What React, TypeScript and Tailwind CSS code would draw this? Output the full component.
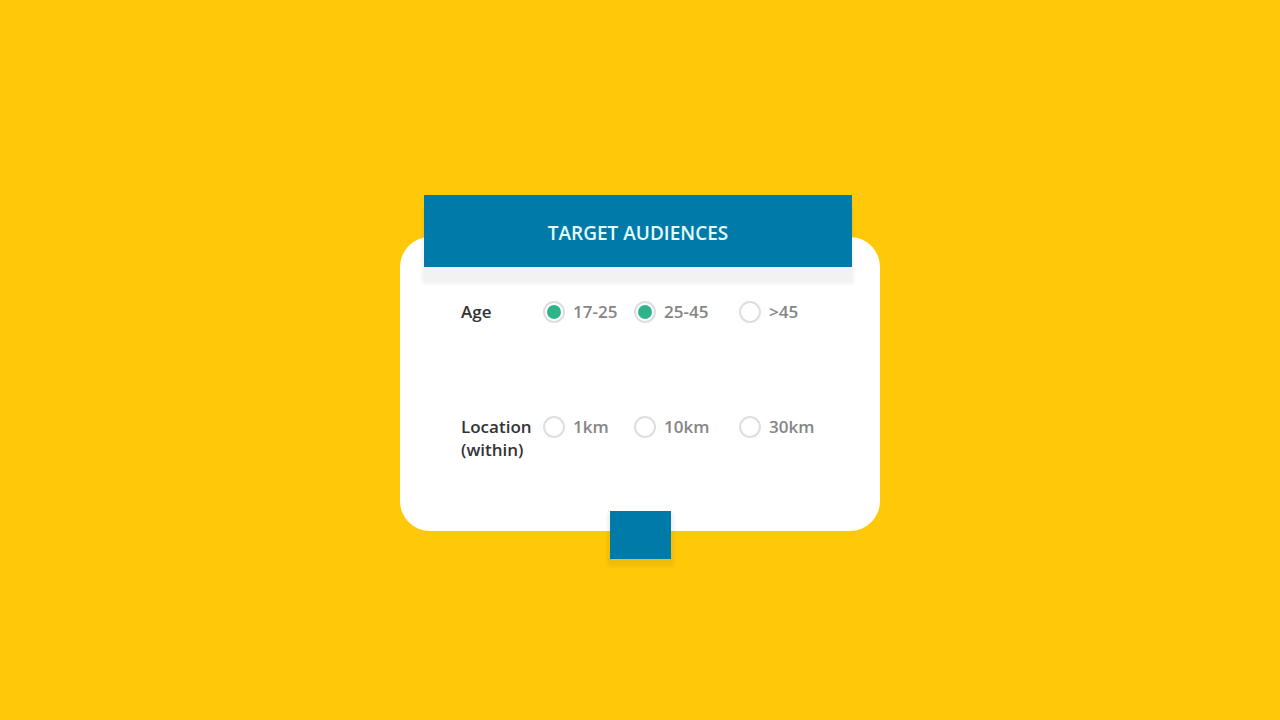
type Option = { id: string; label: string; checked?: boolean };

const ages: Option[] = [
  { id: 'age-17-25', label: '17-25', checked: true },
  { id: 'age-25-45', label: '25-45', checked: true },
  { id: 'age-over-45', label: '>45' },
];

const distances: Option[] = [
  { id: 'within-1km', label: '1km' },
  { id: 'within-10km', label: '10km' },
  { id: 'within-30km', label: '30km' },
];

function Choice({ id, label, checked }: Option) {
  return (
    <label htmlFor={id} className="flex h-[23px] items-center gap-2 whitespace-nowrap text-[#858585]">
      <input
        id={id}
        type="checkbox"
        defaultChecked={checked}
        className="size-[22px] shrink-0 appearance-none rounded-full border-2 border-[#dedede] bg-white bg-clip-content p-[2px] checked:bg-[#2cb58a]"
      />
      {label}
    </label>
  );
}

function Row({ title, options }: { title: string; options: Option[] }) {
  return (
    <div role="group" aria-label={title} className="grid grid-cols-[82px_91px_105px_auto] text-[17px] leading-[23px] font-semibold">
      <span className="whitespace-pre-line text-[#333333]">{title}</span>
      {options.map((option) => (
        <Choice key={option.id} {...option} />
      ))}
    </div>
  );
}

export default function App() {
  return (
    <main className="flex min-h-screen items-center justify-center bg-[#ffc90a] pt-12 font-['Open_Sans','Noto_Sans',sans-serif]">
      <section className="flex w-full max-w-[480px] flex-col rounded-[30px] bg-white">
        <h1 className="-mt-[42px] mr-7 ml-6 flex h-[72px] items-center justify-center bg-[#007aa9] pt-1 text-[19px] leading-6 font-semibold text-[#e6fbff] shadow-[0_15px_3px_2px_rgba(0,0,0,0.05)]">
          TARGET AUDIENCES
        </h1>
        <form className="flex flex-col">
          <div className="flex flex-col gap-[92px] pt-[33px] pr-8 pb-[50px] pl-[61px]">
            <Row title="Age" options={ages} />
            <Row title={'Location\n(within)'} options={distances} />
          </div>
          <button
            type="submit"
            aria-label="Submit"
            className="-mb-7 h-12 w-[61px] self-center bg-[#007aa9] shadow-[0_5px_3px_3px_rgba(0,0,0,0.06)]"
          />
        </form>
      </section>
    </main>
  );
}
